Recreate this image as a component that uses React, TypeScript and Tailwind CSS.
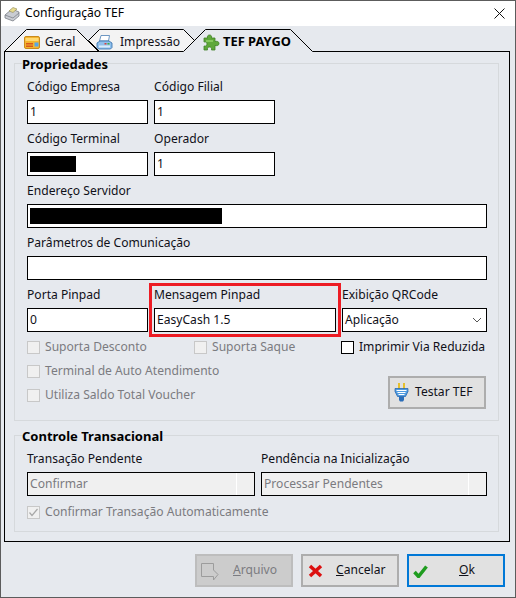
import React from "react";

const font = "font-['Noto_Sans',sans-serif]";

function Label({ text }: { text: string }) {
  return <span className="h-[28px] whitespace-nowrap pt-[6px] leading-[18px]">{text}</span>;
}

function Field({ label, value, className = "" }: { label: string; value?: string; className?: string }) {
  return (
    <div className={`flex flex-col ${className}`}>
      <Label text={label} />
      <div className="flex h-[24px] items-center border border-black bg-white pl-[2px]">{value}</div>
    </div>
  );
}

function MaskedField({ label, width, className = "" }: { label: string; width: string; className?: string }) {
  return (
    <div className={`flex flex-col ${className}`}>
      <Label text={label} />
      <div className="flex h-[24px] items-center border border-black bg-white pl-[2px]">
        <div className={`h-[16px] bg-black ${width}`} />
      </div>
    </div>
  );
}

function DisabledSelect({ label, value, className = "" }: { label: string; value: string; className?: string }) {
  return (
    <div className={`flex flex-col ${className}`}>
      <Label text={label} />
      <div className="flex h-[24px] border border-black bg-[#f0f0f0] pl-[2px] text-[#7b7b80]">
        <span className="flex flex-1 items-center">{value}</span>
        <div className="w-[18px] border-l border-white" />
      </div>
    </div>
  );
}

function Check({ label, disabled = true, checked = false, className = "" }: { label: string; disabled?: boolean; checked?: boolean; className?: string }) {
  return (
    <div className={`flex h-[18px] items-center gap-[5px] whitespace-nowrap ${disabled ? "text-[#7b7b80]" : "text-[#101018]"} ${className}`}>
      <span className={`flex h-[13px] w-[13px] items-center justify-center border ${disabled ? "border-[#c8c8c8] bg-[#f0f0f0]" : "border-black bg-white"}`}>
        {checked && (
          <svg width="11" height="11" viewBox="0 0 11 11" fill="none">
            <path d="M1.500 5.500 4 8.500 9.500 2" stroke="#a8a8a8" strokeWidth="1.200" />
          </svg>
        )}
      </span>
      <span className="leading-[18px]">{label}</span>
    </div>
  );
}

function CashIcon() {
  return (
    <svg width="17" height="16" viewBox="0 0 17 16">
      <path d="M1 9 8 3l7 3v4l-6 5-8-3z" fill="#c9ccd2" stroke="#6b7078" strokeWidth=".7" />
      <path d="M5 5l4-3.500 4 1.500-4 3.500z" fill="#e9dc8e" stroke="#8a8458" strokeWidth=".6" />
      <path d="M1 9l8 3 6-5" fill="none" stroke="#7d828a" strokeWidth=".8" />
    </svg>
  );
}

function FolderCardIcon() {
  return (
    <svg width="16" height="13" viewBox="0 0 16 13">
      <rect x=".5" y=".5" width="15" height="12" rx="1.500" fill="#f5b52e" stroke="#c98a1c" />
      <rect x="1.500" y="2" width="13" height="3" fill="#ffd970" />
      <rect x="2" y="7" width="7" height="1.500" fill="#d8571c" />
      <rect x="2" y="9.500" width="7" height="1.500" fill="#d8571c" />
      <rect x="10.500" y="6.500" width="4" height="4" fill="#58a7e8" />
    </svg>
  );
}

function PrinterIcon() {
  return (
    <svg width="17" height="15" viewBox="0 0 17 15">
      <path d="M5 .5h8.500L12.500 6h-9z" fill="#fff" stroke="#4a7fb5" strokeWidth=".8" />
      <path d="M1 8l3-2h9l3 2v4.500L14.500 14h-12L1 12.500z" fill="#8fc0ec" stroke="#2f6aa8" strokeWidth=".8" />
      <rect x="3" y="10.500" width="11" height="2" fill="#dcecfa" />
      <rect x="11.500" y="8" width="2" height="1.500" fill="#3fae3f" />
      <rect x="8.500" y="8" width="2" height="1.500" fill="#d84040" />
    </svg>
  );
}

function PuzzleIcon() {
  return (
    <svg width="17" height="17" viewBox="0 0 17 17">
      <path
        d="M1 4h3.500C4 2 5 1 6.500 1S9 2 8.500 4H12v3.500c2-.5 4 0 4 2s-2 2.500-4 2V16H8.500c.5-2-.5-3-2-3s-2.500 1-2 3H1v-4c2 .5 3-.5 3-2S3 7.500 1 8z"
        fill="#5fa83a"
        stroke="#3f8026"
        strokeWidth=".8"
      />
      <path d="M3 6h7v2H3z" fill="#86c95c" />
    </svg>
  );
}

function PlugIcon() {
  return (
    <svg width="15" height="22" viewBox="0 0 15 22">
      <rect x="4" y="1" width="2" height="7" fill="#e6c02c" />
      <rect x="9" y="1" width="2" height="7" fill="#e6c02c" />
      <path d="M1 6.500h13v3l-2.500 5h-8L1 9.500z" fill="#4f9be0" stroke="#1f5fa8" strokeWidth=".7" />
      <path d="M2.500 8.500h10M3.500 10.500h8M4.500 12.500h6" stroke="#fff" strokeWidth="1" />
      <path d="M5 14.500h5V18l-1 1.500H6L5 18z" fill="#2a6db8" />
    </svg>
  );
}

export default function App() {
  return (
    <div className={`flex h-[598px] w-[516px] flex-col border border-[#5c5c5c] bg-[#e6e9ee] text-[12.1px] text-[#101018] ${font}`}>
      {/* title bar */}
      <div className="flex h-[25px] items-center bg-white pl-[3px] pr-[10px]">
        <CashIcon />
        <span className="ml-[4px] text-black">Configuração TEF</span>
        <svg className="ml-auto" width="11" height="11" viewBox="0 0 11 11">
          <path d="M.5.5l10 10M10.500.5l-10 10" stroke="#111" strokeWidth="1" />
        </svg>
      </div>

      {/* tabs */}
      <div className="relative z-10 ml-[3px] mt-[3px] flex h-[23px]">
        <div className="relative h-[23px] w-[95px]">
          <svg className="absolute left-0 top-0" width="95" height="23" viewBox="0 0 95 23">
            <path d="M.5 22.500 22.500.5h50l22 22z" fill="#f3f3f3" stroke="#000" />
          </svg>
          <div className="relative flex h-full items-center pl-[20px] pt-[3px]">
            <FolderCardIcon />
            <span className="ml-[5px]">Geral</span>
          </div>
        </div>
        <div className="relative -ml-[11px] h-[23px] w-[107px]">
          <svg className="absolute left-0 top-0" width="107" height="23" viewBox="0 0 107 23">
            <path d="M.5 11.500 11.500.5h84l11 11-11 11h-84z" fill="#f3f3f3" stroke="#000" />
          </svg>
          <div className="relative flex h-full items-center pl-[8px] pt-[3px]">
            <PrinterIcon />
            <span className="ml-[7px]">Impressão</span>
          </div>
        </div>
        <div className="relative -ml-[12px] h-[23px] w-[130px]">
          <svg className="absolute left-0 top-0" width="130" height="23" viewBox="0 0 130 23">
            <path d="M0 23 22.500.5h85L130 23z" fill="#e6e9ee" />
            <path d="M.5 22.500 22.500.5h85l22 22" fill="none" stroke="#000" />
          </svg>
          <div className="relative flex h-full items-center pl-[20px] pt-[3px] text-[12.900px] font-bold text-black">
            <PuzzleIcon />
            <span className="ml-[3px]">TEF PAYGO</span>
          </div>
        </div>
      </div>

      {/* page */}
      <div className="-mt-px ml-[3px] mr-[5px] flex h-[491px] flex-col border border-black pl-[9px] pr-[10px] pt-[11px]">
        {/* Propriedades */}
        <div className="relative h-[358px] border border-[#d6d9dc] pl-[12px] pr-[11px] pt-[8px]">
          <span className="absolute -top-[8px] left-[7px] bg-[#e6e9ee] text-[13px] font-bold leading-[16px] text-black">Propriedades</span>
          <div className="flex gap-[6px]">
            <Field className="w-[121px]" label="Código Empresa" value="1" />
            <Field className="w-[121px]" label="Código Filial" value="1" />
          </div>
          <div className="flex gap-[6px]">
            <MaskedField className="w-[121px]" label="Código Terminal" width="w-[46px]" />
            <Field className="w-[121px]" label="Operador" value="1" />
          </div>
          <MaskedField label="Endereço Servidor" width="w-[192px]" />
          <Field label="Parâmetros de Comunicação" />
          <div className="flex gap-[6px]">
            <Field className="w-[121px]" label="Porta Pinpad" value="0" />
            <div className="relative w-[182px]">
              <Field label="Mensagem Pinpad" value="EasyCash 1.5" />
              <div className="pointer-events-none absolute -bottom-[5px] -left-[5px] -right-[5px] top-[3px] border-[3px] border-[#ed1c24]" />
            </div>
            <div className="flex flex-1 flex-col">
              <Label text="Exibição QRCode" />
              <div className="flex h-[24px] items-center justify-between border border-black bg-white pl-[2px] pr-[4px]">
                <span>Aplicação</span>
                <svg width="10" height="6" viewBox="0 0 10 6" fill="none">
                  <path d="M1 1l4 4 4-4" stroke="#555" strokeWidth="1" />
                </svg>
              </div>
            </div>
          </div>
          <div className="mt-[6px] flex">
            <Check className="w-[167px]" label="Suporta Desconto" />
            <Check className="w-[147px]" label="Suporta Saque" />
            <Check disabled={false} label="Imprimir Via Reduzida" />
          </div>
          <div className="flex">
            <div className="mt-[6px] flex flex-col gap-[6px]">
              <Check label="Terminal de Auto Atendimento" />
              <Check label="Utiliza Saldo Total Voucher" />
            </div>
            <button className="ml-auto mr-[1px] mt-[20px] flex h-[33px] w-[98px] items-center gap-[6px] border-2 border-[#adadad] bg-[#e1e1e1] pl-[4px]">
              <PlugIcon />
              <span>Testar TEF</span>
            </button>
          </div>
        </div>

        {/* Controle Transacional */}
        <div className="relative mt-[14px] h-[97px] border border-[#d6d9dc] pl-[12px] pr-[11px] pt-[8px]">
          <span className="absolute -top-[8px] left-[7px] bg-[#e6e9ee] text-[13px] font-bold leading-[16px] text-black">Controle Transacional</span>
          <div className="flex gap-[6px]">
            <DisabledSelect className="w-[228px]" label="Transação Pendente" value="Confirmar" />
            <DisabledSelect className="w-[226px]" label="Pendência na Inicialização" value="Processar Pendentes" />
          </div>
          <Check className="mt-[7px]" checked label="Confirmar Transação Automaticamente" />
        </div>
      </div>

      {/* buttons */}
      <div className="mt-[12px] flex justify-end gap-[8px] pr-[10px]">
        <button className="flex h-[33px] w-[98px] items-center border-2 border-[#bdbdbd] bg-[#cccccc] pl-[4px] text-[#7b7b80]">
          <svg width="18" height="20" viewBox="0 0 18 20" fill="none">
            <path d="M12.500 9V2.500H.5v13h12V19l4.500-5.500L12.500 9z" stroke="#9c9c9c" />
          </svg>
          <span className="ml-[14px]"><u>A</u>rquivo</span>
        </button>
        <button className="flex h-[33px] w-[98px] items-center border-2 border-[#adadad] bg-[#e1e1e1] pl-[5px]">
          <svg width="15" height="14" viewBox="0 0 15 14">
            <path d="M2 2l11 10M13 2 2 12" stroke="#dc1010" strokeWidth="3.500" />
          </svg>
          <span className="ml-[13px]"><u>C</u>ancelar</span>
        </button>
        <button className="flex h-[33px] w-[98px] items-center border-2 border-[#0078d7] bg-[#e1e1e1] pl-[4px]">
          <svg width="15" height="14" viewBox="0 0 15 14">
            <path d="M1.500 8l4 4.500 8-10" fill="none" stroke="#1f9c1f" strokeWidth="3.500" />
          </svg>
          <span className="ml-[31px]"><u>O</u>k</span>
        </button>
      </div>
    </div>
  );
}
